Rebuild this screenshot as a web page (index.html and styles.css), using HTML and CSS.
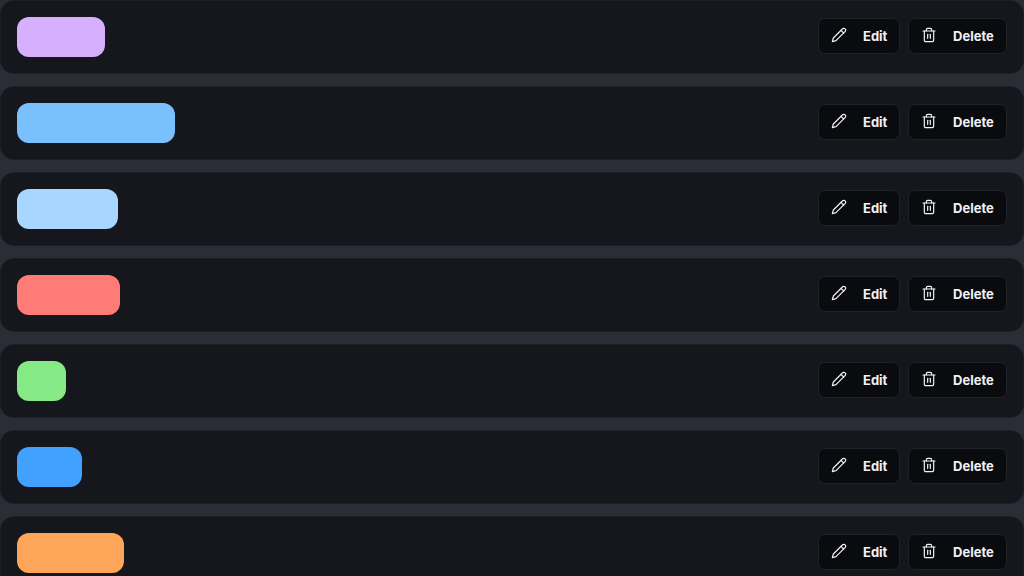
FILE: index.html
```html
<!DOCTYPE html>
<html lang="en">

<head>
    <meta charset="UTF-8">
    <title>Labels</title>
    <link rel="stylesheet" href="styles.css">
</head>

<body>
    <svg class="icon-defs" width="0" height="0" aria-hidden="true">
        <symbol id="icon-pencil" viewBox="0 0 24 24">
            <path d="M17 3a2.85 2.83 0 1 1 4 4L7.5 20.5 2 22l1.5-5.5Z" />
            <path d="M15 5l4 4" />
        </symbol>
        <symbol id="icon-trash" viewBox="0 0 24 24">
            <path d="M3 6h18" />
            <path d="M19 6v14a2 2 0 0 1-2 2H7a2 2 0 0 1-2-2V6" />
            <path d="M8 6V4a2 2 0 0 1 2-2h4a2 2 0 0 1 2 2v2" />
            <path d="M10 11v6" />
            <path d="M14 11v6" />
        </symbol>
    </svg>

    <main class="list">
        <article class="row">
            <span class="tag tag-purple"></span>
            <div class="actions">
                <button class="btn btn-edit"><svg class="icon"><use href="#icon-pencil" /></svg>Edit</button>
                <button class="btn btn-delete"><svg class="icon"><use href="#icon-trash" /></svg>Delete</button>
            </div>
        </article>
        <article class="row">
            <span class="tag tag-blue"></span>
            <div class="actions">
                <button class="btn btn-edit"><svg class="icon"><use href="#icon-pencil" /></svg>Edit</button>
                <button class="btn btn-delete"><svg class="icon"><use href="#icon-trash" /></svg>Delete</button>
            </div>
        </article>
        <article class="row">
            <span class="tag tag-sky"></span>
            <div class="actions">
                <button class="btn btn-edit"><svg class="icon"><use href="#icon-pencil" /></svg>Edit</button>
                <button class="btn btn-delete"><svg class="icon"><use href="#icon-trash" /></svg>Delete</button>
            </div>
        </article>
        <article class="row">
            <span class="tag tag-red"></span>
            <div class="actions">
                <button class="btn btn-edit"><svg class="icon"><use href="#icon-pencil" /></svg>Edit</button>
                <button class="btn btn-delete"><svg class="icon"><use href="#icon-trash" /></svg>Delete</button>
            </div>
        </article>
        <article class="row">
            <span class="tag tag-green"></span>
            <div class="actions">
                <button class="btn btn-edit"><svg class="icon"><use href="#icon-pencil" /></svg>Edit</button>
                <button class="btn btn-delete"><svg class="icon"><use href="#icon-trash" /></svg>Delete</button>
            </div>
        </article>
        <article class="row">
            <span class="tag tag-azure"></span>
            <div class="actions">
                <button class="btn btn-edit"><svg class="icon"><use href="#icon-pencil" /></svg>Edit</button>
                <button class="btn btn-delete"><svg class="icon"><use href="#icon-trash" /></svg>Delete</button>
            </div>
        </article>
        <article class="row">
            <span class="tag tag-orange"></span>
            <div class="actions">
                <button class="btn btn-edit"><svg class="icon"><use href="#icon-pencil" /></svg>Edit</button>
                <button class="btn btn-delete"><svg class="icon"><use href="#icon-trash" /></svg>Delete</button>
            </div>
        </article>
    </main>
</body>

</html>
```

FILE: styles.css
```css
html,
body {
    height: 100%;
    overflow: hidden;
}

body {
    background-color: #2a2d36;
    margin: 0;
    font-family: Inter, "Liberation Sans", sans-serif;
}

.icon-defs {
    position: absolute;
}

.list {
    display: flex;
    flex-direction: column;
    gap: 12px;
}

.row {
    display: flex;
    align-items: center;
    justify-content: space-between;
    height: 74px;
    box-sizing: border-box;
    padding: 0 16px;
    background-color: #15171c;
    border: 1px solid #1c1e24;
    border-radius: 14px;
    flex-shrink: 0;
}

.tag {
    display: block;
    height: 40px;
    border-radius: 12px;
}

.tag-purple {
    width: 88px;
    background-color: #d6afff;
}

.tag-blue {
    width: 158px;
    background-color: #7ac0ff;
}

.tag-sky {
    width: 101px;
    background-color: #a9d6ff;
}

.tag-red {
    width: 103px;
    background-color: #ff7b76;
}

.tag-green {
    width: 48.5px;
    background-color: #85ea85;
}

.tag-azure {
    width: 65px;
    background-color: #42a0ff;
}

.tag-orange {
    width: 107px;
    background-color: #ffa559;
}

.actions {
    display: flex;
    gap: 8px;
    margin-bottom: 3px;
}

.btn {
    display: flex;
    align-items: center;
    height: 36px;
    box-sizing: border-box;
    padding: 0 12px;
    background-color: #0a0b0e;
    border: 1px solid #20222a;
    border-radius: 7px;
    color: #f1f1f3;
    font-family: inherit;
    font-size: 13px;
    font-weight: 700;
}

.btn-edit {
    width: 82px;
    gap: 16px;
}

.btn-delete {
    width: 99px;
    gap: 16px;
}

.icon {
    width: 16px;
    height: 16px;
    margin-top: -2px;
    flex-shrink: 0;
    fill: none;
    stroke: currentColor;
    stroke-width: 1.8;
    stroke-linecap: round;
    stroke-linejoin: round;
}
```
